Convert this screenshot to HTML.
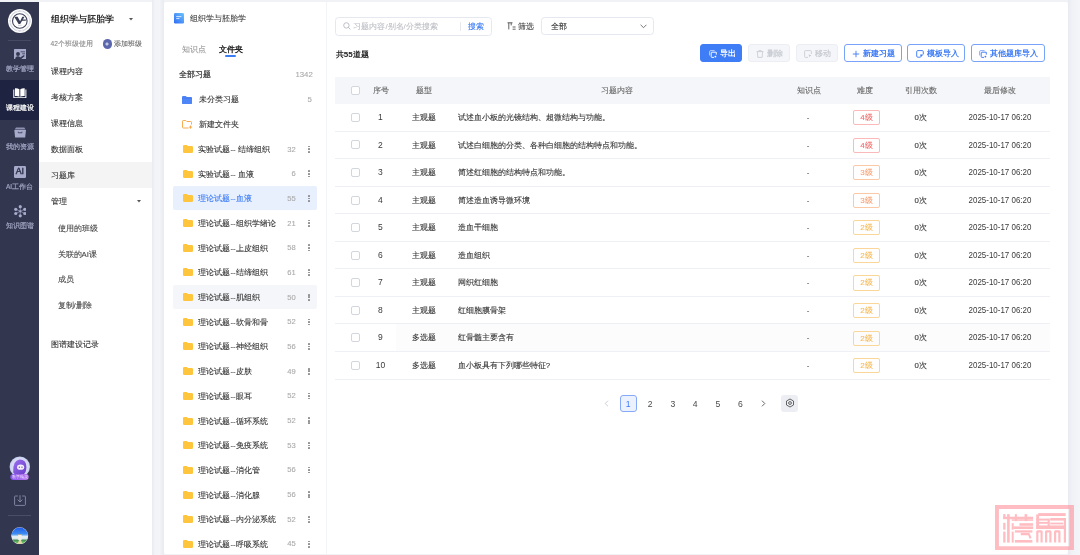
<!DOCTYPE html>
<html><head><meta charset="utf-8">
<style>
*{box-sizing:border-box;margin:0;padding:0}
html,body{width:1080px;height:555px;overflow:hidden;will-change:transform;-webkit-text-stroke:.1px;background:#f0f2f6;font-family:"Liberation Sans",sans-serif;color:#333}
.abs{position:absolute}
#nav{position:absolute;left:0;top:2px;width:39px;height:553px;background:#32364f}
#navc .sep{position:absolute;left:8px;width:23px;height:1px;background:#464a63}
#navc .it{position:absolute;left:0;width:39px;text-align:center;font-size:6.5px;color:#a2a5c2;-webkit-text-stroke:.2px #a2a5c2;white-space:nowrap;line-height:8px}
#navc .act{position:absolute;left:0;top:79.5px;width:39px;height:40px;background:#1e2341}
#side{position:absolute;left:39px;top:2px;width:113px;height:553px;background:#fff}
.mi{position:absolute;left:50.7px;font-size:7.8px;color:#333;white-space:nowrap;line-height:10px}
.mi.sub{left:57.5px;color:#444}
#gap{position:absolute;left:152px;top:0;width:11.5px;height:555px;background:linear-gradient(90deg,#e9ebf1 0,#f3f4f8 30%,#f4f5f9 60%,#e9ebf0 100%)}
#card{position:absolute;left:163.5px;top:2px;width:904.5px;height:552px;background:#fff;border-radius:2px}
#vline{position:absolute;left:325.5px;top:2px;width:1px;height:552px;background:#f3f4f7}
.frow{position:absolute;left:172.7px;width:144.1px;height:24px;border-radius:2px}
.frow.sel{background:#e8effd}
.frow.sel .ft{color:#3c7cf5}
.frow.hov{background:#f5f6f9}
.frow .fi{position:absolute;left:10px;top:8px}
.frow .ft{position:absolute;left:25.8px;top:8px;font-size:7.8px;line-height:10px;color:#333;white-space:nowrap}
.frow .fc{position:absolute;right:21px;top:7.6px;font-size:7.6px;line-height:10px;color:#aaa}
.dots{position:absolute;left:135.2px;top:8.8px;width:2px;height:8px}
.dots i{display:block;width:1.8px;height:1.7px;background:#8a8a8a;border-radius:50%;margin-bottom:.9px}
.trow{position:absolute;left:335px;width:715px;height:27.56px;border-bottom:1px solid #eff0f5}
.trow span{position:absolute;top:0;line-height:27px;font-size:7.8px;color:#333;white-space:nowrap}
.trow .cb{left:16px;top:8.9px;width:9px;height:9px;border:1px solid #d3d6dd;border-radius:2px;background:#fff}
.trow .c-no{left:35.4px;width:20px;text-align:center;font-size:8.5px;-webkit-text-stroke:0;color:#3a3a3a}
.trow .c-type{left:69px;width:40px;text-align:center}
.trow .c-txt{left:122.8px}
.trow .c-kp{left:453px;width:40px;text-align:center}
.trow .c-ref{left:565.6px;width:40px;text-align:center}
.trow .c-date{left:624.6px;width:80px;text-align:center;font-size:8.6px;-webkit-text-stroke:0;transform:scaleX(.925);color:#3a3a3a}
.trow .tag{left:518px;top:6.1px;width:27.2px;height:15.1px;line-height:13.1px;text-align:center;border:1px solid;border-radius:2px;font-size:8px}
.tag.l4{border-color:#fbb9b9;color:#f26b6b}
.tag.l3{border-color:#fcc9a6;color:#f8a073}
.tag.l2{border-color:#fbd699;color:#f7b955}
.hov9{background:linear-gradient(90deg,#fff 0,#fff 61px,#fcfcfd 61px)}
.th{position:absolute;top:77px;left:335px;width:715px;height:26.6px;background:#f5f6f9}
.th span{position:absolute;top:1px;line-height:26.6px;font-size:7.6px;color:#666;white-space:nowrap}
.btn{position:absolute;top:44.3px;height:18px;border-radius:3px;font-size:7.8px;line-height:16px;white-space:nowrap;font-weight:bold;-webkit-text-stroke:0}
.btn.pri{background:#3f7df7;color:#fff;border:1px solid #3f7df7}
.btn.dis{background:#f5f6f9;color:#c9ccd3;border:1px solid #eceef3}
.btn.out{background:#fff;color:#3d7bf6;border:1px solid #78a3f8}
.btn svg{position:absolute;top:4.4px}
.btn .tx{position:absolute;top:.9px}
.pg{position:absolute;top:394.9px;width:17px;height:16.7px;font-size:8.6px;line-height:18.2px;text-align:center;color:#4a4a4a;-webkit-text-stroke:0}
</style></head><body>
<div id="nav">
</div>
<div id="side"></div>
<div id="gap"></div>
<div id="card"></div>
<div id="vline"></div>

<!-- second sidebar -->
<div class="abs" style="left:50.8px;top:13.7px;font-size:8.9px;font-weight:bold;-webkit-text-stroke:0;color:#333;line-height:11px;white-space:nowrap">组织学与胚胎学</div>
<svg class="abs" style="left:128.5px;top:17.5px" width="4" height="3" viewBox="0 0 4 3"><path d="M0 0H4L2 2.5Z" fill="#555"/></svg>
<div class="abs" style="left:50.6px;top:39.5px;font-size:6.6px;color:#888;line-height:8px;white-space:nowrap">42个班级使用</div>
<div class="abs" style="left:102.8px;top:39.4px;width:9.2px;height:9.2px;border-radius:50%;background:#5a67ad"></div>
<svg class="abs" style="left:105.4px;top:42px" width="4" height="4" viewBox="0 0 4 4"><path d="M2 0.3V3.7M0.3 2H3.7" stroke="#fff" stroke-width="0.8"/></svg>
<div class="abs" style="left:113.9px;top:40px;font-size:6.6px;color:#666;line-height:8px;white-space:nowrap">添加班级</div>

<div class="abs" style="left:39px;top:162.2px;width:113px;height:25.6px;background:#f4f4f5"></div>
<div class="mi" style="top:67.3px">课程内容</div>
<div class="mi" style="top:93.2px">考核方案</div>
<div class="mi" style="top:118.9px">课程信息</div>
<div class="mi" style="top:144.7px">数据面板</div>
<div class="mi" style="top:170.7px">习题库</div>
<div class="mi" style="top:197.2px">管理</div>
<svg class="abs" style="left:136.6px;top:200px" width="4" height="3" viewBox="0 0 4 3"><path d="M0 0H4L2 2.5Z" fill="#555"/></svg>
<div class="mi sub" style="top:224.2px">使用的班级</div>
<div class="mi sub" style="top:249.6px">关联的AI课</div>
<div class="mi sub" style="top:275.3px">成员</div>
<div class="mi sub" style="top:301.4px">复制/删除</div>
<div class="mi" style="top:339.6px">图谱建设记录</div>

<!-- folder panel -->
<svg class="abs" style="left:174.2px;top:13.2px" width="10" height="10.4" viewBox="0 0 10 10.4"><defs><linearGradient id="bg1" x1="1" y1="0" x2="0" y2="1"><stop offset="0" stop-color="#6cc4fb"/><stop offset="1" stop-color="#2f6cf5"/></linearGradient></defs><rect x="0" y="0" width="10" height="10.4" rx="1.2" fill="url(#bg1)"/><path d="M2.2 3.6H7.4M2.2 5.6H5.4" stroke="#fff" stroke-width="0.9" opacity=".85"/></svg>
<div class="abs" style="left:189.9px;top:14.3px;font-size:7.8px;color:#444;line-height:10px;white-space:nowrap">组织学与胚胎学</div>
<div class="abs" style="left:181.7px;top:44.7px;font-size:7.8px;color:#999;line-height:10px;white-space:nowrap">知识点</div>
<div class="abs" style="left:219px;top:44.7px;font-size:7.8px;color:#222;-webkit-text-stroke:.35px;line-height:10px;white-space:nowrap">文件夹</div>
<div class="abs" style="left:225.3px;top:55px;width:10.7px;height:1.5px;background:#3c7cf5;border-radius:1px"></div>
<div class="abs" style="left:178.9px;top:70.2px;font-size:7.8px;color:#333;-webkit-text-stroke:.2px;line-height:10px;white-space:nowrap">全部习题</div>
<div class="abs" style="left:295.4px;top:69.8px;font-size:7.8px;color:#aaa;line-height:10px;white-space:nowrap">1342</div>

<svg class="abs" style="left:182.1px;top:95.5px" width="10" height="8.2" viewBox="0 0 10 8.2"><path d="M0 1Q0 0 1 0H3.8L4.8 1H9Q10 1 10 2V7.2Q10 8.2 9 8.2H1Q0 8.2 0 7.2Z" fill="#4f86f7"/><path d="M0 2.2H10" stroke="#3a6fe0" stroke-width=".5"/></svg>
<div class="abs" style="left:198.9px;top:95.3px;font-size:7.8px;color:#333;line-height:10px;white-space:nowrap">未分类习题</div>
<div class="abs" style="left:307.6px;top:94.9px;font-size:7.8px;color:#aaa;line-height:10px">5</div>
<svg class="abs" style="left:182px;top:119.8px" width="11" height="9" viewBox="0 0 11 9"><path d="M6.5 8H1.3Q0.5 8 0.5 7.2V1.3Q0.5 0.5 1.3 0.5H3.8L4.8 1.5H8.7Q9.5 1.5 9.5 2.3V4.5" fill="none" stroke="#f7a23b" stroke-width=".9"/><path d="M8.5 5.5V8.7M6.9 7.1H10.1" stroke="#f7a23b" stroke-width=".9"/></svg>
<div class="abs" style="left:198.9px;top:120.2px;font-size:7.8px;color:#333;line-height:10px;white-space:nowrap">新建文件夹</div>
<div class="frow" style="top:137.0px"><svg class="fi" width="10" height="8" viewBox="0 0 10 8"><path d="M0 1.2Q0 0 1.2 0H3.8L4.8 1H8.8Q10 1 10 2.2V6.8Q10 8 8.8 8H1.2Q0 8 0 6.8Z" fill="#ffc53d"/></svg><span class="ft">实验试题-- 结缔组织</span><span class="fc">32</span><span class="dots"><i></i><i></i><i></i></span></div>
<div class="frow" style="top:161.7px"><svg class="fi" width="10" height="8" viewBox="0 0 10 8"><path d="M0 1.2Q0 0 1.2 0H3.8L4.8 1H8.8Q10 1 10 2.2V6.8Q10 8 8.8 8H1.2Q0 8 0 6.8Z" fill="#ffc53d"/></svg><span class="ft">实验试题-- 血液</span><span class="fc">6</span><span class="dots"><i></i><i></i><i></i></span></div>
<div class="frow sel" style="top:186.4px"><svg class="fi" width="10" height="8" viewBox="0 0 10 8"><path d="M0 1.2Q0 0 1.2 0H3.8L4.8 1H8.8Q10 1 10 2.2V6.8Q10 8 8.8 8H1.2Q0 8 0 6.8Z" fill="#ffc53d"/></svg><span class="ft">理论试题--血液</span><span class="fc">55</span><span class="dots"><i></i><i></i><i></i></span></div>
<div class="frow" style="top:211.0px"><svg class="fi" width="10" height="8" viewBox="0 0 10 8"><path d="M0 1.2Q0 0 1.2 0H3.8L4.8 1H8.8Q10 1 10 2.2V6.8Q10 8 8.8 8H1.2Q0 8 0 6.8Z" fill="#ffc53d"/></svg><span class="ft">理论试题--组织学绪论</span><span class="fc">21</span><span class="dots"><i></i><i></i><i></i></span></div>
<div class="frow" style="top:235.7px"><svg class="fi" width="10" height="8" viewBox="0 0 10 8"><path d="M0 1.2Q0 0 1.2 0H3.8L4.8 1H8.8Q10 1 10 2.2V6.8Q10 8 8.8 8H1.2Q0 8 0 6.8Z" fill="#ffc53d"/></svg><span class="ft">理论试题--上皮组织</span><span class="fc">58</span><span class="dots"><i></i><i></i><i></i></span></div>
<div class="frow" style="top:260.4px"><svg class="fi" width="10" height="8" viewBox="0 0 10 8"><path d="M0 1.2Q0 0 1.2 0H3.8L4.8 1H8.8Q10 1 10 2.2V6.8Q10 8 8.8 8H1.2Q0 8 0 6.8Z" fill="#ffc53d"/></svg><span class="ft">理论试题--结缔组织</span><span class="fc">61</span><span class="dots"><i></i><i></i><i></i></span></div>
<div class="frow hov" style="top:285.1px"><svg class="fi" width="10" height="8" viewBox="0 0 10 8"><path d="M0 1.2Q0 0 1.2 0H3.8L4.8 1H8.8Q10 1 10 2.2V6.8Q10 8 8.8 8H1.2Q0 8 0 6.8Z" fill="#ffc53d"/></svg><span class="ft">理论试题--肌组织</span><span class="fc">50</span><span class="dots"><i></i><i></i><i></i></span></div>
<div class="frow" style="top:309.8px"><svg class="fi" width="10" height="8" viewBox="0 0 10 8"><path d="M0 1.2Q0 0 1.2 0H3.8L4.8 1H8.8Q10 1 10 2.2V6.8Q10 8 8.8 8H1.2Q0 8 0 6.8Z" fill="#ffc53d"/></svg><span class="ft">理论试题--软骨和骨</span><span class="fc">52</span><span class="dots"><i></i><i></i><i></i></span></div>
<div class="frow" style="top:334.4px"><svg class="fi" width="10" height="8" viewBox="0 0 10 8"><path d="M0 1.2Q0 0 1.2 0H3.8L4.8 1H8.8Q10 1 10 2.2V6.8Q10 8 8.8 8H1.2Q0 8 0 6.8Z" fill="#ffc53d"/></svg><span class="ft">理论试题--神经组织</span><span class="fc">56</span><span class="dots"><i></i><i></i><i></i></span></div>
<div class="frow" style="top:359.1px"><svg class="fi" width="10" height="8" viewBox="0 0 10 8"><path d="M0 1.2Q0 0 1.2 0H3.8L4.8 1H8.8Q10 1 10 2.2V6.8Q10 8 8.8 8H1.2Q0 8 0 6.8Z" fill="#ffc53d"/></svg><span class="ft">理论试题--皮肤</span><span class="fc">49</span><span class="dots"><i></i><i></i><i></i></span></div>
<div class="frow" style="top:383.8px"><svg class="fi" width="10" height="8" viewBox="0 0 10 8"><path d="M0 1.2Q0 0 1.2 0H3.8L4.8 1H8.8Q10 1 10 2.2V6.8Q10 8 8.8 8H1.2Q0 8 0 6.8Z" fill="#ffc53d"/></svg><span class="ft">理论试题--眼耳</span><span class="fc">52</span><span class="dots"><i></i><i></i><i></i></span></div>
<div class="frow" style="top:408.5px"><svg class="fi" width="10" height="8" viewBox="0 0 10 8"><path d="M0 1.2Q0 0 1.2 0H3.8L4.8 1H8.8Q10 1 10 2.2V6.8Q10 8 8.8 8H1.2Q0 8 0 6.8Z" fill="#ffc53d"/></svg><span class="ft">理论试题--循环系统</span><span class="fc">52</span><span class="dots"><i></i><i></i><i></i></span></div>
<div class="frow" style="top:433.2px"><svg class="fi" width="10" height="8" viewBox="0 0 10 8"><path d="M0 1.2Q0 0 1.2 0H3.8L4.8 1H8.8Q10 1 10 2.2V6.8Q10 8 8.8 8H1.2Q0 8 0 6.8Z" fill="#ffc53d"/></svg><span class="ft">理论试题--免疫系统</span><span class="fc">53</span><span class="dots"><i></i><i></i><i></i></span></div>
<div class="frow" style="top:457.8px"><svg class="fi" width="10" height="8" viewBox="0 0 10 8"><path d="M0 1.2Q0 0 1.2 0H3.8L4.8 1H8.8Q10 1 10 2.2V6.8Q10 8 8.8 8H1.2Q0 8 0 6.8Z" fill="#ffc53d"/></svg><span class="ft">理论试题--消化管</span><span class="fc">56</span><span class="dots"><i></i><i></i><i></i></span></div>
<div class="frow" style="top:482.5px"><svg class="fi" width="10" height="8" viewBox="0 0 10 8"><path d="M0 1.2Q0 0 1.2 0H3.8L4.8 1H8.8Q10 1 10 2.2V6.8Q10 8 8.8 8H1.2Q0 8 0 6.8Z" fill="#ffc53d"/></svg><span class="ft">理论试题--消化腺</span><span class="fc">56</span><span class="dots"><i></i><i></i><i></i></span></div>
<div class="frow" style="top:507.2px"><svg class="fi" width="10" height="8" viewBox="0 0 10 8"><path d="M0 1.2Q0 0 1.2 0H3.8L4.8 1H8.8Q10 1 10 2.2V6.8Q10 8 8.8 8H1.2Q0 8 0 6.8Z" fill="#ffc53d"/></svg><span class="ft">理论试题--内分泌系统</span><span class="fc">52</span><span class="dots"><i></i><i></i><i></i></span></div>
<div class="frow" style="top:531.9px"><svg class="fi" width="10" height="8" viewBox="0 0 10 8"><path d="M0 1.2Q0 0 1.2 0H3.8L4.8 1H8.8Q10 1 10 2.2V6.8Q10 8 8.8 8H1.2Q0 8 0 6.8Z" fill="#ffc53d"/></svg><span class="ft">理论试题--呼吸系统</span><span class="fc">45</span><span class="dots"><i></i><i></i><i></i></span></div>


<!-- main -->
<div class="abs" style="left:335.1px;top:17px;width:157.3px;height:18.5px;border:1px solid #e6e8ef;border-radius:3.5px"></div>
<svg class="abs" style="left:342.5px;top:22px" width="8" height="8" viewBox="0 0 8 8"><circle cx="3.4" cy="3.4" r="2.7" fill="none" stroke="#b5b8bf" stroke-width=".9"/><path d="M5.4 5.4L7.4 7.4" stroke="#b5b8bf" stroke-width=".9"/></svg>
<div class="abs" style="left:353.4px;top:21.9px;font-size:8px;color:#bdbfc5;line-height:10px;white-space:nowrap">习题内容/别名/分类搜索</div>
<div class="abs" style="left:459.5px;top:21.5px;width:1px;height:9px;background:#e6e8ee"></div>
<div class="abs" style="left:467.8px;top:21.9px;font-size:8px;color:#3c7cf5;line-height:10px;white-space:nowrap">搜索</div>
<svg class="abs" style="left:506.5px;top:22px" width="9" height="8" viewBox="0 0 9 8"><path d="M0.5 0.8H5.5M1.8 0.8V7.4M4.2 0.8V3.4M5.6 5H8.6M5.6 7.2H8.6" stroke="#444" stroke-width=".85" fill="none"/></svg>
<div class="abs" style="left:518px;top:21.9px;font-size:7.6px;color:#444;line-height:10px;white-space:nowrap">筛选</div>
<div class="abs" style="left:541px;top:17.2px;width:112.6px;height:18.3px;border:1px solid #e6e8ef;border-radius:3.5px"></div>
<div class="abs" style="left:550.5px;top:21.9px;font-size:7.6px;color:#333;line-height:10px;white-space:nowrap">全部</div>
<svg class="abs" style="left:639.5px;top:24px" width="7" height="5" viewBox="0 0 7 5"><path d="M0.6 0.8L3.5 3.7L6.4 0.8" stroke="#666" stroke-width=".9" fill="none"/></svg>
<div class="abs" style="left:335.8px;top:49.7px;font-size:8px;color:#222;font-weight:bold;-webkit-text-stroke:0;line-height:10px;white-space:nowrap">共55道题</div>

<!-- buttons -->
<div class="btn pri" style="left:700.3px;width:42.2px">
 <svg style="left:7.6px" width="8" height="8" viewBox="0 0 8 8"><path d="M0.6 5.4V1.8Q0.6 0.6 1.8 0.6H5.6" fill="none" stroke="#fff" stroke-width=".8" opacity=".8"/><path d="M5 7.4H3Q2.2 7.4 2.2 6.6V3Q2.2 2.2 3 2.2H7.2M7.3 2.2V4.6" fill="none" stroke="#fff" stroke-width=".95"/><circle cx="6.4" cy="6.6" r=".9" fill="#fff"/></svg>
 <span class="tx" style="left:18.4px">导出</span></div>
<div class="btn dis" style="left:748.2px;width:41.9px">
 <svg style="left:7.3px" width="8" height="8" viewBox="0 0 8 8"><path d="M0.6 1.6H7.4M2.8 1.6V0.6H5.2V1.6M1.4 1.6L1.8 7.4H6.2L6.6 1.6" fill="none" stroke="#c9ccd3" stroke-width=".85"/></svg>
 <span class="tx" style="left:18px">删除</span></div>
<div class="btn dis" style="left:795.8px;width:42.3px">
 <svg style="left:7.5px" width="8" height="8" viewBox="0 0 8 8"><path d="M4 7.4H1.4Q0.6 7.4 0.6 6.6V1.4Q0.6 0.6 1.4 0.6H6.6Q7.4 0.6 7.4 1.4V4" fill="none" stroke="#c9ccd3" stroke-width=".85"/><path d="M4.6 4.2L7.4 5.6L6 6.2L5.4 7.6Z" fill="#c9ccd3"/></svg>
 <span class="tx" style="left:18.2px">移动</span></div>
<div class="btn out" style="left:843.9px;width:57.7px">
 <svg style="left:7.3px" width="8" height="8" viewBox="0 0 8 8"><path d="M4 0.8V7.2M0.8 4H7.2" stroke="#3d7bf6" stroke-width=".9"/></svg>
 <span class="tx" style="left:18.4px">新建习题</span></div>
<div class="btn out" style="left:907px;width:57.8px">
 <svg style="left:7.7px" width="8" height="8" viewBox="0 0 8 8"><path d="M4.4 7.2H1.8Q0.7 7.2 0.7 6.1V1.7Q0.7 0.6 1.8 0.6H6.2Q7.3 0.6 7.3 1.7V4.4" fill="none" stroke="#3d7bf6" stroke-width=".95"/><path d="M4.2 4.6H7.4L4.6 7.6Z" fill="#3d7bf6"/></svg>
 <span class="tx" style="left:18.6px">模板导入</span></div>
<div class="btn out" style="left:971.2px;width:73.5px">
 <svg style="left:7.3px" width="8" height="8" viewBox="0 0 8 8"><path d="M0.6 5.4V1.8Q0.6 0.6 1.8 0.6H5.6" fill="none" stroke="#3d7bf6" stroke-width=".8" opacity=".75"/><path d="M5 7.4H3Q2.2 7.4 2.2 6.6V3Q2.2 2.2 3 2.2H7.2M7.3 2.2V4.6" fill="none" stroke="#3d7bf6" stroke-width=".95"/><circle cx="6.4" cy="6.6" r=".9" fill="#3d7bf6"/></svg>
 <span class="tx" style="left:18.2px">其他题库导入</span></div>

<!-- table -->
<div class="th"><span class="cb2" style="left:16px;top:8.8px;width:9px;height:9px;border:1px solid #d3d6dd;border-radius:2px;background:#fff"></span><span style="left:37.8px">序号</span><span style="left:81.4px">题型</span><span style="left:266px">习题内容</span><span style="left:462px">知识点</span><span style="left:521.8px">难度</span><span style="left:570px">引用次数</span><span style="left:649px">最后修改</span></div>
<div class="trow" style="top:104.00px"><span class="cb"></span><span class="c-no">1</span><span class="c-type">主观题</span><span class="c-txt">试述血小板的光镜结构、超微结构与功能。</span><span class="c-kp">-</span><span class="tag l4">4级</span><span class="c-ref">0次</span><span class="c-date">2025-10-17 06:20</span></div>
<div class="trow" style="top:131.56px"><span class="cb"></span><span class="c-no">2</span><span class="c-type">主观题</span><span class="c-txt">试述白细胞的分类、各种白细胞的结构特点和功能。</span><span class="c-kp">-</span><span class="tag l4">4级</span><span class="c-ref">0次</span><span class="c-date">2025-10-17 06:20</span></div>
<div class="trow" style="top:159.12px"><span class="cb"></span><span class="c-no">3</span><span class="c-type">主观题</span><span class="c-txt">简述红细胞的结构特点和功能。</span><span class="c-kp">-</span><span class="tag l3">3级</span><span class="c-ref">0次</span><span class="c-date">2025-10-17 06:20</span></div>
<div class="trow" style="top:186.68px"><span class="cb"></span><span class="c-no">4</span><span class="c-type">主观题</span><span class="c-txt">简述造血诱导微环境</span><span class="c-kp">-</span><span class="tag l3">3级</span><span class="c-ref">0次</span><span class="c-date">2025-10-17 06:20</span></div>
<div class="trow" style="top:214.24px"><span class="cb"></span><span class="c-no">5</span><span class="c-type">主观题</span><span class="c-txt">造血干细胞</span><span class="c-kp">-</span><span class="tag l2">2级</span><span class="c-ref">0次</span><span class="c-date">2025-10-17 06:20</span></div>
<div class="trow" style="top:241.80px"><span class="cb"></span><span class="c-no">6</span><span class="c-type">主观题</span><span class="c-txt">造血组织</span><span class="c-kp">-</span><span class="tag l2">2级</span><span class="c-ref">0次</span><span class="c-date">2025-10-17 06:20</span></div>
<div class="trow" style="top:269.36px"><span class="cb"></span><span class="c-no">7</span><span class="c-type">主观题</span><span class="c-txt">网织红细胞</span><span class="c-kp">-</span><span class="tag l2">2级</span><span class="c-ref">0次</span><span class="c-date">2025-10-17 06:20</span></div>
<div class="trow" style="top:296.92px"><span class="cb"></span><span class="c-no">8</span><span class="c-type">主观题</span><span class="c-txt">红细胞膜骨架</span><span class="c-kp">-</span><span class="tag l2">2级</span><span class="c-ref">0次</span><span class="c-date">2025-10-17 06:20</span></div>
<div class="trow hov9" style="top:324.48px"><span class="cb"></span><span class="c-no">9</span><span class="c-type">多选题</span><span class="c-txt">红骨髓主要含有</span><span class="c-kp">-</span><span class="tag l2">2级</span><span class="c-ref">0次</span><span class="c-date">2025-10-17 06:20</span></div>
<div class="trow" style="top:352.04px"><span class="cb"></span><span class="c-no">10</span><span class="c-type">多选题</span><span class="c-txt">血小板具有下列哪些特征?</span><span class="c-kp">-</span><span class="tag l2">2级</span><span class="c-ref">0次</span><span class="c-date">2025-10-17 06:20</span></div>


<!-- pagination -->
<svg class="abs" style="left:603.5px;top:400px" width="5" height="7" viewBox="0 0 5 7"><path d="M4 0.7L1.2 3.5L4 6.3" stroke="#c5c8cf" stroke-width=".9" fill="none"/></svg>
<div class="pg" style="left:619.6px;border:1px solid #86aaf7;background:#ecf1fe;color:#3c7cf5;border-radius:3px;line-height:16.2px">1</div>
<div class="pg" style="left:641.7px">2</div>
<div class="pg" style="left:664.4px">3</div>
<div class="pg" style="left:686.6px">4</div>
<div class="pg" style="left:709.3px">5</div>
<div class="pg" style="left:731.9px">6</div>
<svg class="abs" style="left:760.5px;top:400px" width="5" height="7" viewBox="0 0 5 7"><path d="M1 0.7L3.8 3.5L1 6.3" stroke="#555" stroke-width=".9" fill="none"/></svg>
<div class="pg" style="left:781.1px;width:16.7px;background:#eceef3;border-radius:3px"></div>
<svg class="abs" style="left:784.5px;top:398.3px" width="10" height="10" viewBox="0 0 10 10"><path d="M5 1L8.5 3V7L5 9L1.5 7V3Z" fill="none" stroke="#555" stroke-width=".9"/><circle cx="5" cy="5" r="1.4" fill="none" stroke="#555" stroke-width=".9"/></svg>

<!-- right strip + bottom -->
<div class="abs" style="left:1068.3px;top:0;width:11.7px;height:555px;background:linear-gradient(90deg,#e9ebf1 0,#f1f2f6 35%,#f4f5f9 100%)"></div>

<!-- watermark -->
<svg class="abs" style="left:995px;top:504.8px" width="80" height="46" viewBox="0 0 80 46"><g opacity=".58" fill="#ff8c96">
<path fill-rule="evenodd" d="M0 0H79V45.1H0ZM3.9 4.1V41.3H74.3V4.1Z"/>
<g transform="translate(5 5.2)">
<rect x="3.2" y="3.9" width="2.3" height="4.8"/><rect x="3.2" y="6.5" width="29.9" height="2.5"/><rect x="7.1" y="3.9" width="2.6" height="28.5"/><rect x="3.2" y="12.6" width="2.3" height="6.9"/><rect x="3.2" y="21.4" width="2.3" height="11"/><rect x="14.9" y="3.9" width="2" height="7"/><rect x="24.6" y="3.9" width="2.6" height="7"/><rect x="11.7" y="9.1" width="21.4" height="1.5"/><rect x="19.5" y="13" width="13.6" height="2.6"/><rect x="11.7" y="13" width="2" height="6.5"/><rect x="13.6" y="16.2" width="19.5" height="2.6"/><rect x="11.7" y="21.4" width="2" height="11"/><rect x="14.9" y="20.1" width="17.5" height="2.3"/><path d="M20.8 22.7H29.5L31.6 27.9L29.6 28.6L28.2 25H20.8Z"/><rect x="14.9" y="29.8" width="17.5" height="2.6"/>
</g>
<g transform="translate(37 5.2)">
<rect x="6.2" y="2.9" width="27.5" height="2.9"/><rect x="4.2" y="4.2" width="2.9" height="14.6"/><rect x="4.2" y="8.4" width="12" height="2"/><rect x="4.2" y="11.7" width="12" height="1.9"/><rect x="4.2" y="15.2" width="29.5" height="3.6"/><rect x="15.6" y="8.4" width="2.2" height="10.4"/><rect x="18.2" y="7.8" width="15.5" height="2.6"/><rect x="18.2" y="12.4" width="13" height="1.8"/><rect x="31.8" y="7.8" width="2.2" height="24.6"/>
<path d="M4.2 32.4V21.5Q4.2 20 5.7 20H9.2Q10.7 20 10.7 21.5V32.4H8.5V22.2H6.4V32.4Z"/><path d="M13 32.4V21.5Q13 20 14.5 20H18Q19.5 20 19.5 21.5V32.4H17.3V22.2H15.2V32.4Z"/><path d="M22 32.4V21.5Q22 20 23.5 20H27Q28.5 20 28.5 21.5V32.4H26.3V22.2H24.2V32.4Z"/>
</g></g></svg>
<div id="navc" style="position:absolute;left:0;top:0;width:39px;height:555px">
<div class="abs" style="left:0;top:0;width:39px;height:2px;background:#f0f2f6"></div>
<!-- logo -->
<svg class="abs" style="left:0;top:0" width="39" height="40" viewBox="0 0 39 40"><circle cx="20" cy="21" r="12" fill="#fff"/><circle cx="20" cy="21" r="9.9" fill="none" stroke="#c3c5d2" stroke-width="1.6" stroke-dasharray=".7 .6"/><circle cx="20" cy="21" r="8.5" fill="#fff"/><circle cx="19.8" cy="21" r="7.3" fill="none" stroke="#3e4259" stroke-width="1.1"/><path d="M14.2 16.7H17.6L20.1 21.2L22.3 16.7H24.5L20.2 24H18.6Z" fill="#3a3e57"/><path d="M22.4 19.4H25.8V20.7H21.8Z" fill="#3a3e57"/><path d="M18 25.3H21.6" stroke="#9a9cb0" stroke-width=".5"/></svg>
<div class="sep" style="top:39.5px"></div>
<!-- 教学管理 -->
<svg class="abs" style="left:13.5px;top:48.7px" width="12.6" height="10.4" viewBox="0 0 12.6 10.4"><rect x="0" y="0" width="12.6" height="10.4" rx=".6" fill="#a5a8c8"/><circle cx="4" cy="5" r="1.95" fill="#32364f"/><path d="M1.2 10.4Q1.2 7.3 4 7.3Q5.4 7.3 6.2 8.4L10 6L10.7 6.9L6.8 10.4Z" fill="#32364f"/><path d="M6.6 2.8H11M8.2 4.8H11" stroke="#32364f" stroke-width=".75"/></svg>
<div class="it" style="top:65.1px">教学管理</div>
<div class="act"></div>
<!-- 课程建设 -->
<svg class="abs" style="left:13px;top:87.8px" width="13.7" height="10.7" viewBox="0 0 13.7 10.7"><path d="M0.3 1.6V10.4H13.4V1.6H12.4V9.2H1.3V1.6Z" fill="#fff"/><path d="M2 0.3Q4.6 0.1 6.4 1.3V8.8Q4.6 7.8 2 8.1Z" fill="#fff"/><path d="M11.7 0.3Q9.1 0.1 7.3 1.3V8.8Q9.1 7.8 11.7 8.1Z" fill="#fff"/></svg>
<div class="it" style="top:104.4px;color:#fff;-webkit-text-stroke:.25px #fff">课程建设</div>
<!-- 我的资源 -->
<svg class="abs" style="left:13.5px;top:127.2px" width="12.3" height="10.4" viewBox="0 0 12.3 10.4"><path d="M2 0.4H10.3L11.6 2.6H0.7Z" fill="#8f92b3"/><path d="M0.3 3H12L11.2 10.4H1.1Z" fill="#a7aacb"/><path d="M4.3 4.7V5.8H8V4.7" fill="none" stroke="#32364f" stroke-width=".8"/></svg>
<div class="it" style="top:143.4px">我的资源</div>
<!-- AI -->
<div class="abs" style="left:13.8px;top:166px;width:12.2px;height:11.6px;background:#a7aacb;border-radius:1.2px;color:#32364f;font-size:8.8px;-webkit-text-stroke:.5px #32364f;line-height:11.8px;text-align:center;letter-spacing:-.1px">AI</div>
<div class="it" style="top:183.4px">AI工作台</div>
<!-- 知识图谱 -->
<svg class="abs" style="left:13.5px;top:205.3px" width="12.5" height="12.5" viewBox="0 0 12.5 12.5"><path d="M6.25 6.3L6.25 1.8M6.25 6.3L1.9 4.3M6.25 6.3L10.6 4.3M6.25 6.3L1.9 8.4M6.25 6.3L10.6 8.4M6.25 6.3V10.7" stroke="#a7aacb" stroke-width=".6"/><g fill="#a7aacb"><circle cx="6.25" cy="1.7" r="1.6"/><circle cx="1.75" cy="4.3" r="1.6"/><circle cx="10.75" cy="4.3" r="1.6"/><circle cx="1.75" cy="8.5" r="1.6"/><circle cx="10.75" cy="8.5" r="1.6"/><circle cx="6.25" cy="10.8" r="1.6"/><circle cx="6.25" cy="6.3" r="1.1"/></g></svg>
<div class="it" style="top:221.6px">知识图谱</div>
<!-- robot -->
<svg class="abs" style="left:0;top:450px" width="39" height="35" viewBox="0 0 39 35"><defs><radialGradient id="rg" cx=".5" cy=".5" r=".5"><stop offset="0" stop-color="#e6e9fb"/><stop offset=".85" stop-color="#d3d8f3"/><stop offset="1" stop-color="#c3c9ee"/></radialGradient><linearGradient id="hg" x1="0" y1="0" x2="1" y2="1"><stop offset="0" stop-color="#9b6ef0"/><stop offset="1" stop-color="#6a3fc8"/></linearGradient><linearGradient id="pg" x1="0" y1="0" x2="1" y2="0"><stop offset="0" stop-color="#8453ee"/><stop offset="1" stop-color="#c17df2"/></linearGradient></defs>
<circle cx="19.8" cy="16.7" r="10.2" fill="url(#rg)"/>
<path d="M13.2 22.5Q12.6 10.5 19.6 9.6Q26.6 9.8 26.4 17.5Q26 22.5 24 24H14.5Z" fill="url(#hg)"/>
<ellipse cx="20.6" cy="17.2" rx="3.6" ry="2.6" fill="#f3f0fa"/><circle cx="19.3" cy="17.2" r=".6" fill="#4a3a8a"/><circle cx="22" cy="17.2" r=".6" fill="#4a3a8a"/>
<rect x="10.3" y="24" width="18.4" height="6" rx="3" fill="url(#pg)"/><text x="19.5" y="28.4" font-size="4.2" fill="#f4ecff" text-anchor="middle" font-family="Liberation Sans,sans-serif">教学精灵</text></svg>
<!-- download -->
<svg class="abs" style="left:13.6px;top:495.4px" width="12" height="11" viewBox="0 0 12 11"><path d="M3.8 1H1.4Q.6 1 .6 1.8V9.6Q.6 10.4 1.4 10.4H10.6Q11.4 10.4 11.4 9.6V1.8Q11.4 1 10.6 1H8.2" fill="none" stroke="#8a8da8" stroke-width=".9"/><path d="M6 .2V6.8M3.6 4.6L6 7L8.4 4.6" fill="none" stroke="#8a8da8" stroke-width=".9"/></svg>
<div class="sep" style="top:515px;background:#4a4e67"></div>
<!-- avatar -->
<svg class="abs" style="left:11px;top:526.6px" width="17.5" height="17.5" viewBox="0 0 17.5 17.5"><defs><linearGradient id="av" x1="0" y1="0" x2="0" y2="1"><stop offset="0" stop-color="#1d58ea"/><stop offset=".4" stop-color="#3d8ef2"/><stop offset=".55" stop-color="#e9f1f8"/><stop offset=".68" stop-color="#d9e4e6"/><stop offset=".75" stop-color="#3d8c5a"/><stop offset=".88" stop-color="#6cbf5a"/><stop offset="1" stop-color="#e0d4a8"/></linearGradient><clipPath id="avc"><circle cx="8.75" cy="8.75" r="8.2"/></clipPath></defs><circle cx="8.75" cy="8.75" r="8.45" fill="#e9eaf0"/><g clip-path="url(#avc)"><rect width="17.5" height="17.5" fill="url(#av)"/><rect x="7.2" y="7.6" width="3.4" height="5.4" fill="#f2efe8"/><path d="M6.6 7.8Q8.9 6.4 11.2 7.8Z" fill="#b89a6a"/><path d="M6.5 17.5L8 13H10L11.5 17.5Z" fill="#e6d8a8"/></g></svg>
</div>

</body></html>
